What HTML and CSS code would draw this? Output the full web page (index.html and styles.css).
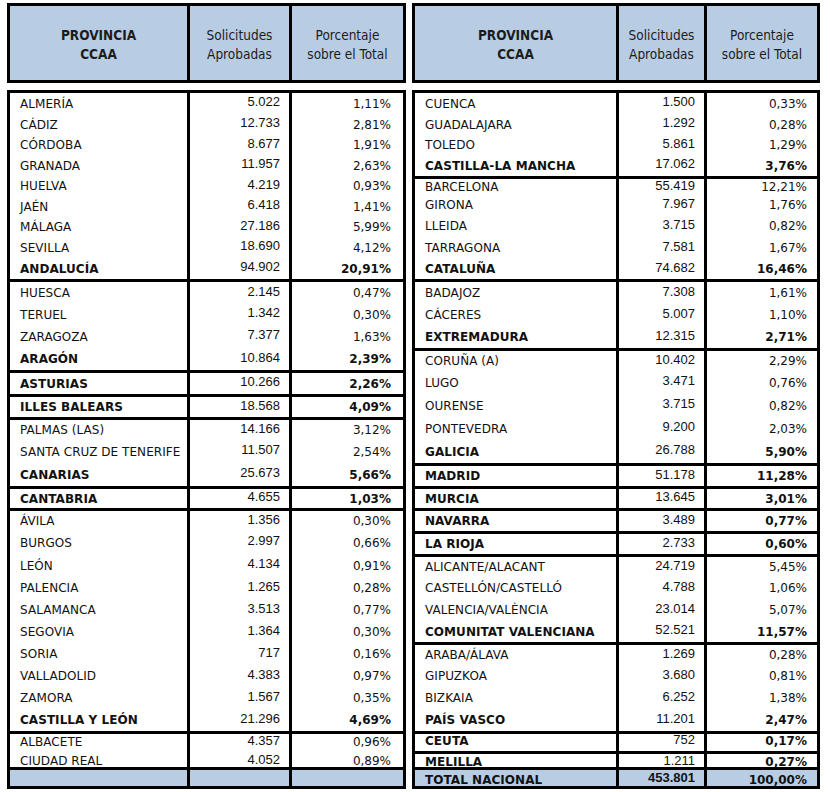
FILE: index.html
```html
<!DOCTYPE html>
<html lang="es">
<head>
<meta charset="utf-8">
<title>Solicitudes aprobadas por provincia</title>
<link rel="stylesheet" href="styles.css">
</head>
<body>
<div class="sheet">
  <section class="side left">
    <div class="box head">
      <div class="c1 hc b">PROVINCIA<br>CCAA</div>
      <div class="c2 hc">Solicitudes<br>Aprobadas</div>
      <div class="c3 hc">Porcentaje<br>sobre el Total</div>
    </div>
    <div class="box body">
      <div class="row h21"><span class="c1">ALMERÍA</span><span class="c2">5.022</span><span class="c3">1,11%</span></div>
      <div class="row h21"><span class="c1">CÁDIZ</span><span class="c2">12.733</span><span class="c3">2,81%</span></div>
      <div class="row h20"><span class="c1">CÓRDOBA</span><span class="c2">8.677</span><span class="c3">1,91%</span></div>
      <div class="row h21"><span class="c1">GRANADA</span><span class="c2">11.957</span><span class="c3">2,63%</span></div>
      <div class="row h20"><span class="c1">HUELVA</span><span class="c2">4.219</span><span class="c3">0,93%</span></div>
      <div class="row h21"><span class="c1">JAÉN</span><span class="c2">6.418</span><span class="c3">1,41%</span></div>
      <div class="row h20"><span class="c1">MÁLAGA</span><span class="c2">27.186</span><span class="c3">5,99%</span></div>
      <div class="row h21"><span class="c1">SEVILLA</span><span class="c2">18.690</span><span class="c3">4,12%</span></div>
      <div class="row h21 end sub"><span class="c1">ANDALUCÍA</span><span class="c2">94.902</span><span class="c3">20,91%</span></div>

      <div class="row h22"><span class="c1">HUESCA</span><span class="c2">2.145</span><span class="c3">0,47%</span></div>
      <div class="row h21"><span class="c1">TERUEL</span><span class="c2">1.342</span><span class="c3">0,30%</span></div>
      <div class="row h23"><span class="c1">ZARAGOZA</span><span class="c2">7.377</span><span class="c3">1,63%</span></div>
      <div class="row h22 end sub"><span class="c1">ARAGÓN</span><span class="c2">10.864</span><span class="c3">2,39%</span></div>

      <div class="row h21 end sub"><span class="c1">ASTURIAS</span><span class="c2">10.266</span><span class="c3">2,26%</span></div>

      <div class="row h20 end sub"><span class="c1">ILLES BALEARS</span><span class="c2">18.568</span><span class="c3">4,09%</span></div>

      <div class="row h20"><span class="c1">PALMAS (LAS)</span><span class="c2">14.166</span><span class="c3">3,12%</span></div>
      <div class="row h23"><span class="c1">SANTA CRUZ DE TENERIFE</span><span class="c2">11.507</span><span class="c3">2,54%</span></div>
      <div class="row h23 end sub"><span class="c1">CANARIAS</span><span class="c2">25.673</span><span class="c3">5,66%</span></div>

      <div class="row h19 end sub"><span class="c1">CANTABRIA</span><span class="c2">4.655</span><span class="c3">1,03%</span></div>

      <div class="row h20"><span class="c1">ÁVILA</span><span class="c2">1.356</span><span class="c3">0,30%</span></div>
      <div class="row h23"><span class="c1">BURGOS</span><span class="c2">2.997</span><span class="c3">0,66%</span></div>
      <div class="row h23"><span class="c1">LEÓN</span><span class="c2">4.134</span><span class="c3">0,91%</span></div>
      <div class="row h22"><span class="c1">PALENCIA</span><span class="c2">1.265</span><span class="c3">0,28%</span></div>
      <div class="row h22"><span class="c1">SALAMANCA</span><span class="c2">3.513</span><span class="c3">0,77%</span></div>
      <div class="row h22"><span class="c1">SEGOVIA</span><span class="c2">1.364</span><span class="c3">0,30%</span></div>
      <div class="row h22"><span class="c1">SORIA</span><span class="c2">717</span><span class="c3">0,16%</span></div>
      <div class="row h22"><span class="c1">VALLADOLID</span><span class="c2">4.383</span><span class="c3">0,97%</span></div>
      <div class="row h22"><span class="c1">ZAMORA</span><span class="c2">1.567</span><span class="c3">0,35%</span></div>
      <div class="row h22 end sub"><span class="c1">CASTILLA Y LEÓN</span><span class="c2">21.296</span><span class="c3">4,69%</span></div>

      <div class="row h16"><span class="c1">ALBACETE</span><span class="c2">4.357</span><span class="c3">0,96%</span></div>
      <div class="row h17 end lower"><span class="c1">CIUDAD REAL</span><span class="c2">4.052</span><span class="c3">0,89%</span></div>

      <div class="row h16 total"><span class="c1"></span><span class="c2"></span><span class="c3"></span></div>
    </div>
  </section>

  <section class="side right">
    <div class="box head">
      <div class="c1 hc b">PROVINCIA<br>CCAA</div>
      <div class="c2 hc">Solicitudes<br>Aprobadas</div>
      <div class="c3 hc">Porcentaje<br>sobre el Total</div>
    </div>
    <div class="box body">
      <div class="row h21"><span class="c1">CUENCA</span><span class="c2">1.500</span><span class="c3">0,33%</span></div>
      <div class="row h21"><span class="c1">GUADALAJARA</span><span class="c2">1.292</span><span class="c3">0,28%</span></div>
      <div class="row h20"><span class="c1">TOLEDO</span><span class="c2">5.861</span><span class="c3">1,29%</span></div>
      <div class="row h21 end sub"><span class="c1">CASTILLA-LA MANCHA</span><span class="c2">17.062</span><span class="c3">3,76%</span></div>

      <div class="row h16"><span class="c1">BARCELONA</span><span class="c2">55.419</span><span class="c3">12,21%</span></div>
      <div class="row h20"><span class="c1">GIRONA</span><span class="c2">7.967</span><span class="c3">1,76%</span></div>
      <div class="row h22"><span class="c1">LLEIDA</span><span class="c2">3.715</span><span class="c3">0,82%</span></div>
      <div class="row h22"><span class="c1">TARRAGONA</span><span class="c2">7.581</span><span class="c3">1,67%</span></div>
      <div class="row h20 end sub"><span class="c1">CATALUÑA</span><span class="c2">74.682</span><span class="c3">16,46%</span></div>

      <div class="row h22"><span class="c1">BADAJOZ</span><span class="c2">7.308</span><span class="c3">1,61%</span></div>
      <div class="row h22"><span class="c1">CÁCERES</span><span class="c2">5.007</span><span class="c3">1,10%</span></div>
      <div class="row h22 end sub"><span class="c1">EXTREMADURA</span><span class="c2">12.315</span><span class="c3">2,71%</span></div>

      <div class="row h20"><span class="c1">CORUÑA (A)</span><span class="c2">10.402</span><span class="c3">2,29%</span></div>
      <div class="row h23"><span class="c1">LUGO</span><span class="c2">3.471</span><span class="c3">0,76%</span></div>
      <div class="row h23"><span class="c1">OURENSE</span><span class="c2">3.715</span><span class="c3">0,82%</span></div>
      <div class="row h23"><span class="c1">PONTEVEDRA</span><span class="c2">9.200</span><span class="c3">2,03%</span></div>
      <div class="row h23 end sub"><span class="c1">GALICIA</span><span class="c2">26.788</span><span class="c3">5,90%</span></div>

      <div class="row h20 end sub"><span class="c1">MADRID</span><span class="c2">51.178</span><span class="c3">11,28%</span></div>
      <div class="row h19 end sub"><span class="c1">MURCIA</span><span class="c2">13.645</span><span class="c3">3,01%</span></div>
      <div class="row h20 end sub"><span class="c1">NAVARRA</span><span class="c2">3.489</span><span class="c3">0,77%</span></div>
      <div class="row h20 end sub"><span class="c1">LA RIOJA</span><span class="c2">2.733</span><span class="c3">0,60%</span></div>

      <div class="row h20"><span class="c1">ALICANTE/ALACANT</span><span class="c2">24.719</span><span class="c3">5,45%</span></div>
      <div class="row h22"><span class="c1">CASTELLÓN/CASTELLÓ</span><span class="c2">4.788</span><span class="c3">1,06%</span></div>
      <div class="row h22"><span class="c1">VALENCIA/VALÈNCIA</span><span class="c2">23.014</span><span class="c3">5,07%</span></div>
      <div class="row h21 end sub"><span class="c1">COMUNITAT VALENCIANA</span><span class="c2">52.521</span><span class="c3">11,57%</span></div>

      <div class="row h20"><span class="c1">ARABA/ÁLAVA</span><span class="c2">1.269</span><span class="c3">0,28%</span></div>
      <div class="row h22"><span class="c1">GIPUZKOA</span><span class="c2">3.680</span><span class="c3">0,81%</span></div>
      <div class="row h22"><span class="c1">BIZKAIA</span><span class="c2">6.252</span><span class="c3">1,38%</span></div>
      <div class="row h22 end sub"><span class="c1">PAÍS VASCO</span><span class="c2">11.201</span><span class="c3">2,47%</span></div>

      <div class="row h17 end sub upper"><span class="c1">CEUTA</span><span class="c2">752</span><span class="c3">0,17%</span></div>
      <div class="row h13 end sub low"><span class="c1">MELILLA</span><span class="c2">1.211</span><span class="c3">0,27%</span></div>

      <div class="row h16 total sub low"><span class="c1">TOTAL NACIONAL</span><span class="c2">453.801</span><span class="c3">100,00%</span></div>
    </div>
  </section>
</div>
</body>
</html>
```
FILE: styles.css
```css
html, body {
  margin: 0;
  padding: 0;
  background: #ffffff;
}

body {
  padding: 3px 0 0 7px;
  font-family: "DejaVu Sans", Verdana, sans-serif;
  color: #111111;
}

.sheet {
  display: flex;
  gap: 6px;
  align-items: flex-start;
}

.side {
  display: flex;
  flex-direction: column;
  gap: 7px;
}

.left {
  --w1: 177px;
  --w2: 102px;
  --w3: 114px;
  --p3: 12px;
}

.right {
  --w1: 201px;
  --w2: 88px;
  --w3: 113px;
  --p3: 10px;
}

.box {
  border: 3px solid #000000;
}

.head {
  display: flex;
  height: 74px;
  background: #b8cce4;
}

.row {
  display: flex;
}

.c1, .c2, .c3 {
  display: flex;
  align-items: center;
  box-sizing: border-box;
  white-space: nowrap;
  overflow: visible;
}

.c1 {
  width: var(--w1);
  padding-left: 10px;
  font-size: 12px;
  letter-spacing: 0.05px;
}

.c2 {
  width: var(--w2);
  border-left: 3px solid #000000;
  justify-content: flex-end;
  padding-right: 9px;
  padding-bottom: 4px;
  font-family: "Liberation Sans", Arial, sans-serif;
  font-size: 13px;
}

.c3 {
  width: var(--w3);
  border-left: 3px solid #000000;
  justify-content: flex-end;
  padding-right: var(--p3);
  font-size: 12px;
}

.hc {
  justify-content: center;
  text-align: center;
  padding: 4px 0 0 0;
  font-family: "DejaVu Sans Condensed", "DejaVu Sans", Tahoma, sans-serif;
  font-stretch: condensed;
  font-size: 13.5px;
  line-height: 19px;
  color: #1c1c1c;
  letter-spacing: 0;
}

.hc.b {
  font-weight: bold;
}

.h13 { height: 13px; }
.h16 { height: 16px; }
.h17 { height: 17px; }
.h19 { height: 19px; }
.h20 { height: 20px; }
.h21 { height: 21px; }
.h22 { height: 22px; }
.h23 { height: 23px; }

.low .c1,
.low .c3 {
  padding-top: 3px;
}

.low .c2 {
  padding-top: 1px;
  padding-bottom: 2px;
}

.lower .c1,
.lower .c3 {
  padding-top: 5px;
}

.lower .c2 {
  padding-top: 2px;
  padding-bottom: 1px;
}

.upper .c1,
.upper .c3 {
  padding-bottom: 3px;
}

.upper .c2 {
  padding-bottom: 6px;
}

.end {
  border-bottom: 3px solid #000000;
}

.sub .c1,
.sub .c3 {
  font-weight: bold;
}

.total {
  background: #b8cce4;
}

.total .c2 {
  font-weight: bold;
}
```
